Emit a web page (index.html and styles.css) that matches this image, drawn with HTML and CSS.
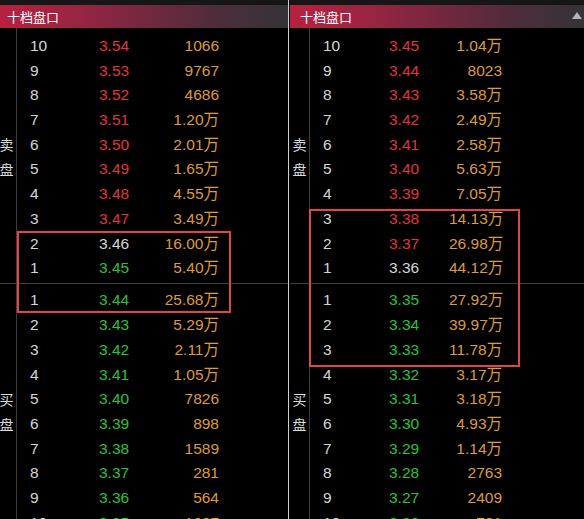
FILE: index.html
```
<!DOCTYPE html>
<html lang="zh">
<head>
<meta charset="utf-8">
<title>十档盘口</title>
<link rel="stylesheet" href="styles.css">
</head>
<body>
<div class="screen">
  <section class="panel panel-left">
    <div class="topstrip"></div>
    <div class="header"><span class="title">十档盘口</span></div>
    <div class="book">
      <div class="side side-sell"><span>卖</span><span>盘</span></div>
      <div class="rows rows-sell">
        <div class="row"><span class="lv">10</span><span class="px up">3.54</span><span class="vol">1066</span></div>
        <div class="row"><span class="lv">9</span><span class="px up">3.53</span><span class="vol">9767</span></div>
        <div class="row"><span class="lv">8</span><span class="px up">3.52</span><span class="vol">4686</span></div>
        <div class="row"><span class="lv">7</span><span class="px up">3.51</span><span class="vol">1.20万</span></div>
        <div class="row"><span class="lv">6</span><span class="px up">3.50</span><span class="vol">2.01万</span></div>
        <div class="row"><span class="lv">5</span><span class="px up">3.49</span><span class="vol">1.65万</span></div>
        <div class="row"><span class="lv">4</span><span class="px up">3.48</span><span class="vol">4.55万</span></div>
        <div class="row"><span class="lv">3</span><span class="px up">3.47</span><span class="vol">3.49万</span></div>
        <div class="row"><span class="lv">2</span><span class="px flat">3.46</span><span class="vol">16.00万</span></div>
        <div class="row"><span class="lv">1</span><span class="px down">3.45</span><span class="vol">5.40万</span></div>
      </div>
      <div class="sep sep-side"></div>
      <div class="sep"></div>
      <div class="side side-buy"><span>买</span><span>盘</span></div>
      <div class="rows">
        <div class="row"><span class="lv">1</span><span class="px down">3.44</span><span class="vol">25.68万</span></div>
        <div class="row"><span class="lv">2</span><span class="px down">3.43</span><span class="vol">5.29万</span></div>
        <div class="row"><span class="lv">3</span><span class="px down">3.42</span><span class="vol">2.11万</span></div>
        <div class="row"><span class="lv">4</span><span class="px down">3.41</span><span class="vol">1.05万</span></div>
        <div class="row"><span class="lv">5</span><span class="px down">3.40</span><span class="vol">7826</span></div>
        <div class="row"><span class="lv">6</span><span class="px down">3.39</span><span class="vol">898</span></div>
        <div class="row"><span class="lv">7</span><span class="px down">3.38</span><span class="vol">1589</span></div>
        <div class="row"><span class="lv">8</span><span class="px down">3.37</span><span class="vol">281</span></div>
        <div class="row"><span class="lv">9</span><span class="px down">3.36</span><span class="vol">564</span></div>
        <div class="row"><span class="lv">10</span><span class="px down">3.35</span><span class="vol">1287</span></div>
      </div>
    </div>
    <div class="mark mark-left"></div>
  </section>

  <div class="divider"></div>
  <div class="gap"></div>

  <section class="panel panel-right">
    <div class="topstrip"></div>
    <div class="header">
      <span class="title">十档盘口</span>
      <svg class="tri" width="10" height="7" viewBox="0 0 10 7"><polygon points="5,0 10,7 0,7" fill="#b4b4b8"/></svg>
    </div>
    <div class="book">
      <div class="side side-sell"><span>卖</span><span>盘</span></div>
      <div class="rows rows-sell">
        <div class="row"><span class="lv">10</span><span class="px up">3.45</span><span class="vol">1.04万</span></div>
        <div class="row"><span class="lv">9</span><span class="px up">3.44</span><span class="vol">8023</span></div>
        <div class="row"><span class="lv">8</span><span class="px up">3.43</span><span class="vol">3.58万</span></div>
        <div class="row"><span class="lv">7</span><span class="px up">3.42</span><span class="vol">2.49万</span></div>
        <div class="row"><span class="lv">6</span><span class="px up">3.41</span><span class="vol">2.58万</span></div>
        <div class="row"><span class="lv">5</span><span class="px up">3.40</span><span class="vol">5.63万</span></div>
        <div class="row"><span class="lv">4</span><span class="px up">3.39</span><span class="vol">7.05万</span></div>
        <div class="row"><span class="lv">3</span><span class="px up">3.38</span><span class="vol">14.13万</span></div>
        <div class="row"><span class="lv">2</span><span class="px up">3.37</span><span class="vol">26.98万</span></div>
        <div class="row"><span class="lv">1</span><span class="px flat">3.36</span><span class="vol">44.12万</span></div>
      </div>
      <div class="sep sep-side"></div>
      <div class="sep"></div>
      <div class="side side-buy"><span>买</span><span>盘</span></div>
      <div class="rows">
        <div class="row"><span class="lv">1</span><span class="px down">3.35</span><span class="vol">27.92万</span></div>
        <div class="row"><span class="lv">2</span><span class="px down">3.34</span><span class="vol">39.97万</span></div>
        <div class="row"><span class="lv">3</span><span class="px down">3.33</span><span class="vol">11.78万</span></div>
        <div class="row"><span class="lv">4</span><span class="px down">3.32</span><span class="vol">3.17万</span></div>
        <div class="row"><span class="lv">5</span><span class="px down">3.31</span><span class="vol">3.18万</span></div>
        <div class="row"><span class="lv">6</span><span class="px down">3.30</span><span class="vol">4.93万</span></div>
        <div class="row"><span class="lv">7</span><span class="px down">3.29</span><span class="vol">1.14万</span></div>
        <div class="row"><span class="lv">8</span><span class="px down">3.28</span><span class="vol">2763</span></div>
        <div class="row"><span class="lv">9</span><span class="px down">3.27</span><span class="vol">2409</span></div>
        <div class="row"><span class="lv">10</span><span class="px down">3.26</span><span class="vol">721</span></div>
      </div>
    </div>
    <div class="mark mark-right"></div>
  </section>
</div>
</body>
</html>
```

FILE: styles.css
```
* {
  box-sizing: border-box;
  margin: 0;
  padding: 0;
}

html,
body {
  background: #000;
}

body {
  width: 584px;
  height: 519px;
  overflow: hidden;
  font-family: "Liberation Sans", "Noto Sans CJK SC", sans-serif;
}

.screen {
  display: flex;
  height: 519px;
  overflow: hidden;
}

.panel {
  position: relative;
  display: flex;
  flex-direction: column;
  flex: none;
}

.panel > * {
  flex: none;
}

.panel-left {
  width: 291px;
  margin-left: -3px;
  --c1: 69px;
  --c2: 60px;
  --c3: 60px;
}

.panel-right {
  width: 294px;
  --c1: 66px;
  --c2: 60px;
  --c3: 53px;
}

.divider {
  width: 1px;
  flex: none;
  background: #cfcfcf;
}

.gap {
  width: 1px;
  flex: none;
}

.topstrip {
  height: 5px;
  background: #161616;
}

.header {
  height: 23px;
  display: flex;
  align-items: center;
  justify-content: space-between;
  padding: 0 2px 0 10px;
  background: linear-gradient(90deg, #b8213f 0%, #9c2443 25%, #72283f 52%, #4a2d3a 78%, #343338 100%);
}

.title {
  font-family: "Noto Sans CJK SC", sans-serif;
  font-size: 13px;
  color: #fff;
  line-height: 23px;
}

.tri {
  display: block;
  margin-top: -2px;
}

.book {
  display: grid;
  grid-template-columns: 20px 1fr;
  grid-template-rows: auto 7.6px auto;
}

.side {
  border-right: 1px solid #3c3c3c;
  display: flex;
  flex-direction: column;
  align-items: center;
  justify-content: center;
  font-family: "Noto Sans CJK SC", sans-serif;
  font-size: 14px;
  line-height: 25px;
  color: #dcdcdc;
}

.side-sell,
.rows-sell {
  padding-top: 6px;
}

.sep {
  background: linear-gradient(to bottom, transparent 2px, #3e3e3e 2px, #3e3e3e 3px, transparent 3px);
}

.sep-side {
  border-right: 1px solid #3c3c3c;
}

.row {
  display: grid;
  grid-template-columns: var(--c1) var(--c2) var(--c3);
  padding-left: 13px;
  height: 24.7px;
  line-height: 24.7px;
  font-size: 15.5px;
  white-space: nowrap;
}

.lv {
  color: #d6d6d6;
}

.px.up {
  color: #e2353b;
}

.px.down {
  color: #27c33e;
}

.px.flat {
  color: #d6d6d6;
}

.vol {
  color: #de9a3e;
  text-align: right;
}

.mark {
  position: absolute;
  border: 2px solid #e2434f;
  pointer-events: none;
}

.mark-left {
  left: 20px;
  top: 231px;
  width: 214px;
  height: 82px;
}

.mark-right {
  left: 19px;
  top: 209px;
  width: 211px;
  height: 158px;
}
```
